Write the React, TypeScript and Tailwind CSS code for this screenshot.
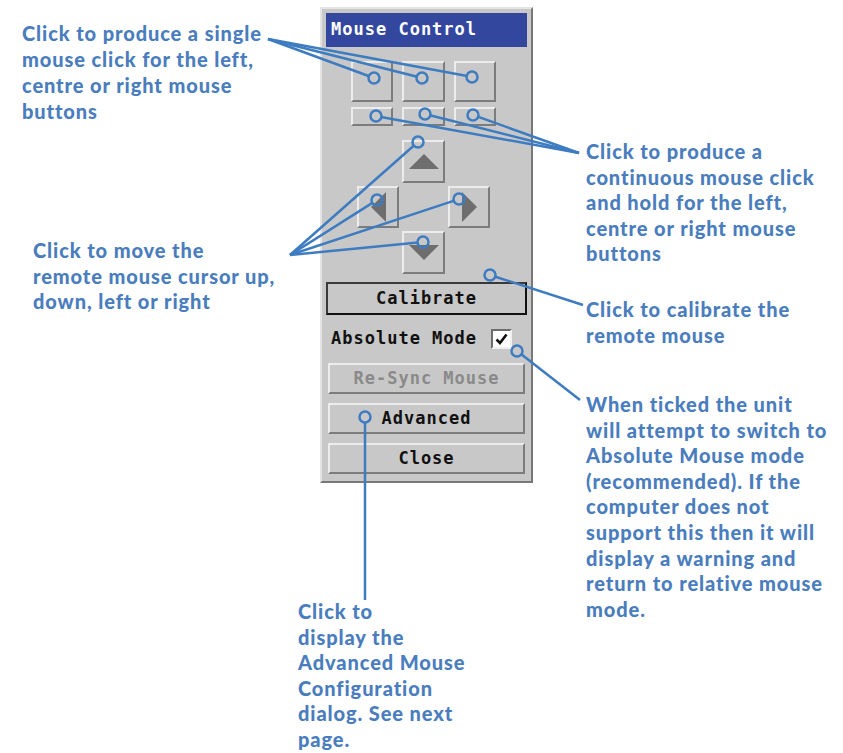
const mono = { fontFamily: '"DejaVu Sans Mono", "Liberation Mono", monospace' };

function Bevel({ className = "", children }: { className?: string; children?: React.ReactNode }) {
  return (
    <div
      className={
        "flex items-center justify-center border-2 border-t-[#ececec] border-l-[#ececec] border-r-[#7c7c7c] border-b-[#7c7c7c] bg-[#c8c8c8] " +
        className
      }
    >
      {children}
    </div>
  );
}

function Tri({ dir }: { dir: "up" | "down" | "left" | "right" }) {
  const pts = {
    up: "0,15 15,0 30,15",
    down: "0,0 30,0 15,15",
    left: "15,0 15,30 0,15",
    right: "0,0 15,15 0,30",
  }[dir];
  const vert = dir === "up" || dir === "down";
  return (
    <svg width={vert ? 30 : 15} height={vert ? 15 : 30} viewBox={vert ? "0 0 30 15" : "0 0 15 30"}>
      <polygon points={pts} fill="#6e6e6e" />
    </svg>
  );
}

function WideButton({ label, className = "", muted = false }: { label: string; className?: string; muted?: boolean }) {
  return (
    <Bevel className={"h-[31px] " + className}>
      <span
        style={mono}
        className={"text-[17px] font-bold tracking-[1px] " + (muted ? "text-[#8a8a8a]" : "text-[#111]")}
      >
        {label}
      </span>
    </Bevel>
  );
}

function Panel() {
  return (
    <div className="ml-[320px] mt-[7px] flex h-[476px] w-[213px] flex-col border-2 border-t-[#e4e4e4] border-l-[#e4e4e4] border-r-[#787878] border-b-[#787878] bg-[#c8c8c8] px-[4px] pt-[4px]">
      <div className="flex h-[34px] w-[201px] items-center bg-[#33479e] pl-[5px]">
        <span style={mono} className="text-[17px] font-bold tracking-[1px] text-white">
          Mouse Control
        </span>
      </div>

      <div className="ml-[25px] mt-[14px] flex gap-[9px]">
        <Bevel className="h-[41px] w-[42px]" />
        <Bevel className="h-[41px] w-[43px]" />
        <Bevel className="h-[41px] w-[42px]" />
      </div>
      <div className="ml-[25px] mt-[5px] flex gap-[9px]">
        <Bevel className="h-[19px] w-[42px]" />
        <Bevel className="h-[19px] w-[43px]" />
        <Bevel className="h-[19px] w-[42px]" />
      </div>

      <div className="ml-[31px] mt-[14px] grid grid-cols-[42px_43px_42px] grid-rows-[43px_42px_43px] gap-[3px]">
        <div />
        <Bevel>
          <Tri dir="up" />
        </Bevel>
        <div />
        <Bevel>
          <Tri dir="left" />
        </Bevel>
        <div />
        <Bevel>
          <Tri dir="right" />
        </Bevel>
        <div />
        <Bevel>
          <Tri dir="down" />
        </Bevel>
        <div />
      </div>

      <div className="mt-[8px] flex h-[33px] w-[201px] items-center justify-center border-2 border-t-[#3a3a3a] border-l-[#3a3a3a] border-r-[#111] border-b-[#111] bg-[#c8c8c8]">
        <span style={mono} className="text-[17px] font-bold tracking-[1px] text-[#111]">
          Calibrate
        </span>
      </div>

      <div className="mt-[14px] flex h-[20px] items-center pl-[5px]">
        <span style={mono} className="text-[17px] font-bold tracking-[1px] text-[#111]">
          Absolute Mode
        </span>
        <div className="ml-[14px] flex h-[20px] w-[21px] items-center justify-center border-2 border-t-[#6c6c6c] border-l-[#6c6c6c] border-r-[#f0f0f0] border-b-[#f0f0f0] bg-white">
          <svg width="13" height="12" viewBox="0 0 13 12">
            <path d="M1.5 6.5 L5 10 L11.5 1.5" fill="none" stroke="#111" strokeWidth="2.6" />
          </svg>
        </div>
      </div>

      <WideButton label="Re-Sync Mouse" muted className="ml-[2px] mt-[14px] w-[197px]" />
      <WideButton label="Advanced" className="ml-[2px] mt-[9px] w-[197px]" />
      <WideButton label="Close" className="ml-[2px] mt-[9px] w-[197px]" />
    </div>
  );
}

function Note({ className, lines }: { className: string; lines: string[] }) {
  return (
    <div
      style={{ fontFamily: 'Lato, "Open Sans", sans-serif' }}
      className={
        "absolute whitespace-nowrap text-[20px] font-black leading-[25.6px] tracking-[0.9px] text-[#4a7dbd] " + className
      }
    >
      {lines.map((l, i) => (
        <div key={i}>{l}</div>
      ))}
    </div>
  );
}

function Callouts() {
  const c = "#3d7cc1";
  const lines: [number, number, number, number][] = [
    [268, 39, 374, 78],
    [268, 39, 422, 78],
    [268, 39, 472, 77],
    [579, 153, 376, 116],
    [579, 153, 425, 114],
    [579, 153, 473, 115],
    [290, 255, 418, 142],
    [290, 255, 377, 200],
    [290, 255, 459, 199],
    [290, 255, 423, 242],
    [583, 305, 490, 275],
    [580, 400, 517, 351],
    [365, 600, 365, 417],
  ];
  const dots: [number, number][] = [
    [374, 78], [422, 78], [472, 77],
    [376, 116], [425, 114], [473, 115],
    [418, 142], [377, 200], [459, 199], [423, 242],
    [490, 275], [517, 351], [365, 417],
  ];
  return (
    <svg className="pointer-events-none absolute left-0 top-0" width="843" height="753">
      {lines.map(([x1, y1, x2, y2], i) => {
        const dx = x2 - x1;
        const dy = y2 - y1;
        const len = Math.hypot(dx, dy);
        return (
          <line
            key={i}
            x1={x1}
            y1={y1}
            x2={x2 - (dx / len) * 5}
            y2={y2 - (dy / len) * 5}
            stroke={c}
            strokeWidth="2.5"
          />
        );
      })}
      {dots.map(([x, y], i) => (
        <circle key={i} cx={x} cy={y} r="5.5" fill="none" stroke={c} strokeWidth="2.5" />
      ))}
    </svg>
  );
}

export default function App() {
  return (
    <div className="relative h-[753px] w-[843px] overflow-hidden bg-white">
      <Panel />
      <Note
        className="left-[22px] top-[20px] leading-[26px]"
        lines={["Click to produce a single", "mouse click for the left,", "centre or right mouse", "buttons"]}
      />
      <Note
        className="left-[586px] top-[139px]"
        lines={[
          "Click to produce a",
          "continuous mouse click",
          "and hold for the left,",
          "centre or right mouse",
          "buttons",
        ]}
      />
      <Note className="left-[586px] top-[297px]" lines={["Click to calibrate the", "remote mouse"]} />
      <Note
        className="left-[586px] top-[392px]"
        lines={[
          "When ticked the unit",
          "will attempt to switch to",
          "Absolute Mouse mode",
          "(recommended). If the",
          "computer does not",
          "support this then it will",
          "display a warning and",
          "return to relative mouse",
          "mode.",
        ]}
      />
      <Note
        className="left-[33px] top-[238px]"
        lines={["Click to move the", "remote mouse cursor up,", "down, left or right"]}
      />
      <Note
        className="left-[298px] top-[599px]"
        lines={["Click to", "display the", "Advanced Mouse", "Configuration", "dialog. See next", "page."]}
      />
      <Callouts />
    </div>
  );
}
